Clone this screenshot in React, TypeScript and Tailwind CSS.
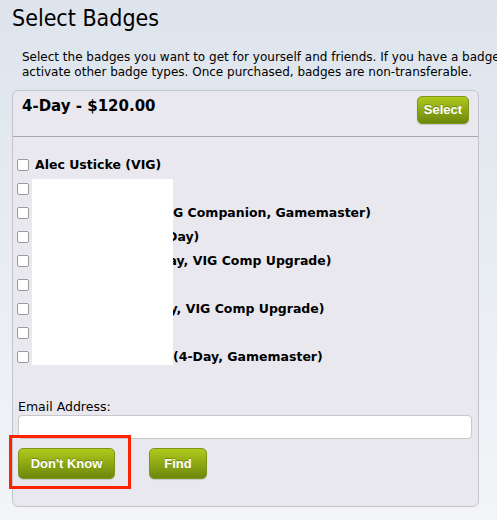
import React from 'react';

// pre = width of the part hidden under the white box
const rows: { pre: number; text: string }[] = [
  { pre: 0, text: 'Alec Usticke (VIG)' },
  { pre: 138, text: '' },
  { pre: 138, text: 'G Companion, Gamemaster)' },
  { pre: 132, text: 'Day)' },
  { pre: 123, text: 'Day, VIG Comp Upgrade)' },
  { pre: 138, text: '' },
  { pre: 116, text: 'Day, VIG Comp Upgrade)' },
  { pre: 138, text: '' },
  { pre: 138, text: '(4-Day, Gamemaster)' },
];

function GreenButton({ children, className }: { children: React.ReactNode; className?: string }) {
  return (
    <button
      className={`rounded-[5px] border border-[#7d961a] bg-gradient-to-b from-[#b0ca1c] to-[#6d870c] font-['Liberation_Sans',sans-serif] text-[13px] font-bold text-white [text-shadow:0_-1px_0_rgba(0,0,0,0.25)] shadow-[0_1px_1px_rgba(0,0,0,0.15)] ${className ?? ''}`}
    >
      {children}
    </button>
  );
}

export default function App() {
  return (
    <div className="h-[520px] w-[497px] overflow-hidden bg-gradient-to-b from-[#dde4ec] via-[#e8edf2] to-[#f3f5f8] font-['DejaVu_Sans',sans-serif] text-black">
      <h1 className="pl-[12px] pt-[3px] text-[23px] leading-[30px] font-['DejaVu_Sans_Condensed','DejaVu_Sans',sans-serif]">Select Badges</h1>
      <p className="mt-[17px] whitespace-nowrap pl-[22px] text-[12px] leading-[15px]">
        Select the badges you want to get for yourself and friends. If you have a badge code, enter it to
        <br />
        activate other badge types. Once purchased, badges are non-transferable.
      </p>

      <div className="ml-[12px] mt-[10px] w-[467px] rounded-[6px] border border-[#c4c3cb] bg-[#e9e8ee]">
        <div className="flex h-[46px] items-start justify-between border-b border-[#a9a8ae] pl-[9px] pr-[9px] pt-[5px]">
          <span className="text-[15px] font-bold leading-[20px]">4-Day - $120.00</span>
          <GreenButton className="h-[28px] w-[52px]">Select</GreenButton>
        </div>

        <div className="relative pl-[4px] pt-[16px]">
          {rows.map((r, i) => (
            <div key={i} className="flex h-[24px] items-center">
              <span className="h-[12px] w-[12px] shrink-0 rounded-[2px] border border-[#9a9a9a] bg-white" />
              <span className="ml-[6px] whitespace-nowrap text-[12.5px] font-bold leading-[16px]">
                <span className="inline-block" style={{ width: r.pre }} />
                {r.text}
              </span>
            </div>
          ))}
          <div className="absolute left-[19px] top-[42px] h-[186px] w-[141px] bg-white" />
        </div>

        <div className="px-[5px] pt-[30px]">
          <label className="block text-[12.5px] leading-[16px]">Email Address:</label>
          <div className="h-[24px] w-[454px] rounded-[4px] border border-[#c8c8cc] bg-white" />
          <div className="mt-[9px] flex items-center gap-[34px] pb-[27px]">
            <div className="relative">
              <GreenButton className="h-[31px] w-[97px]">Don&apos;t Know</GreenButton>
              <div className="pointer-events-none absolute left-[-9px] top-[-13px] h-[54px] w-[122px] border-[3px] border-[#ff2200]" />
            </div>
            <GreenButton className="h-[31px] w-[58px]">Find</GreenButton>
          </div>
        </div>
      </div>
    </div>
  );
}
